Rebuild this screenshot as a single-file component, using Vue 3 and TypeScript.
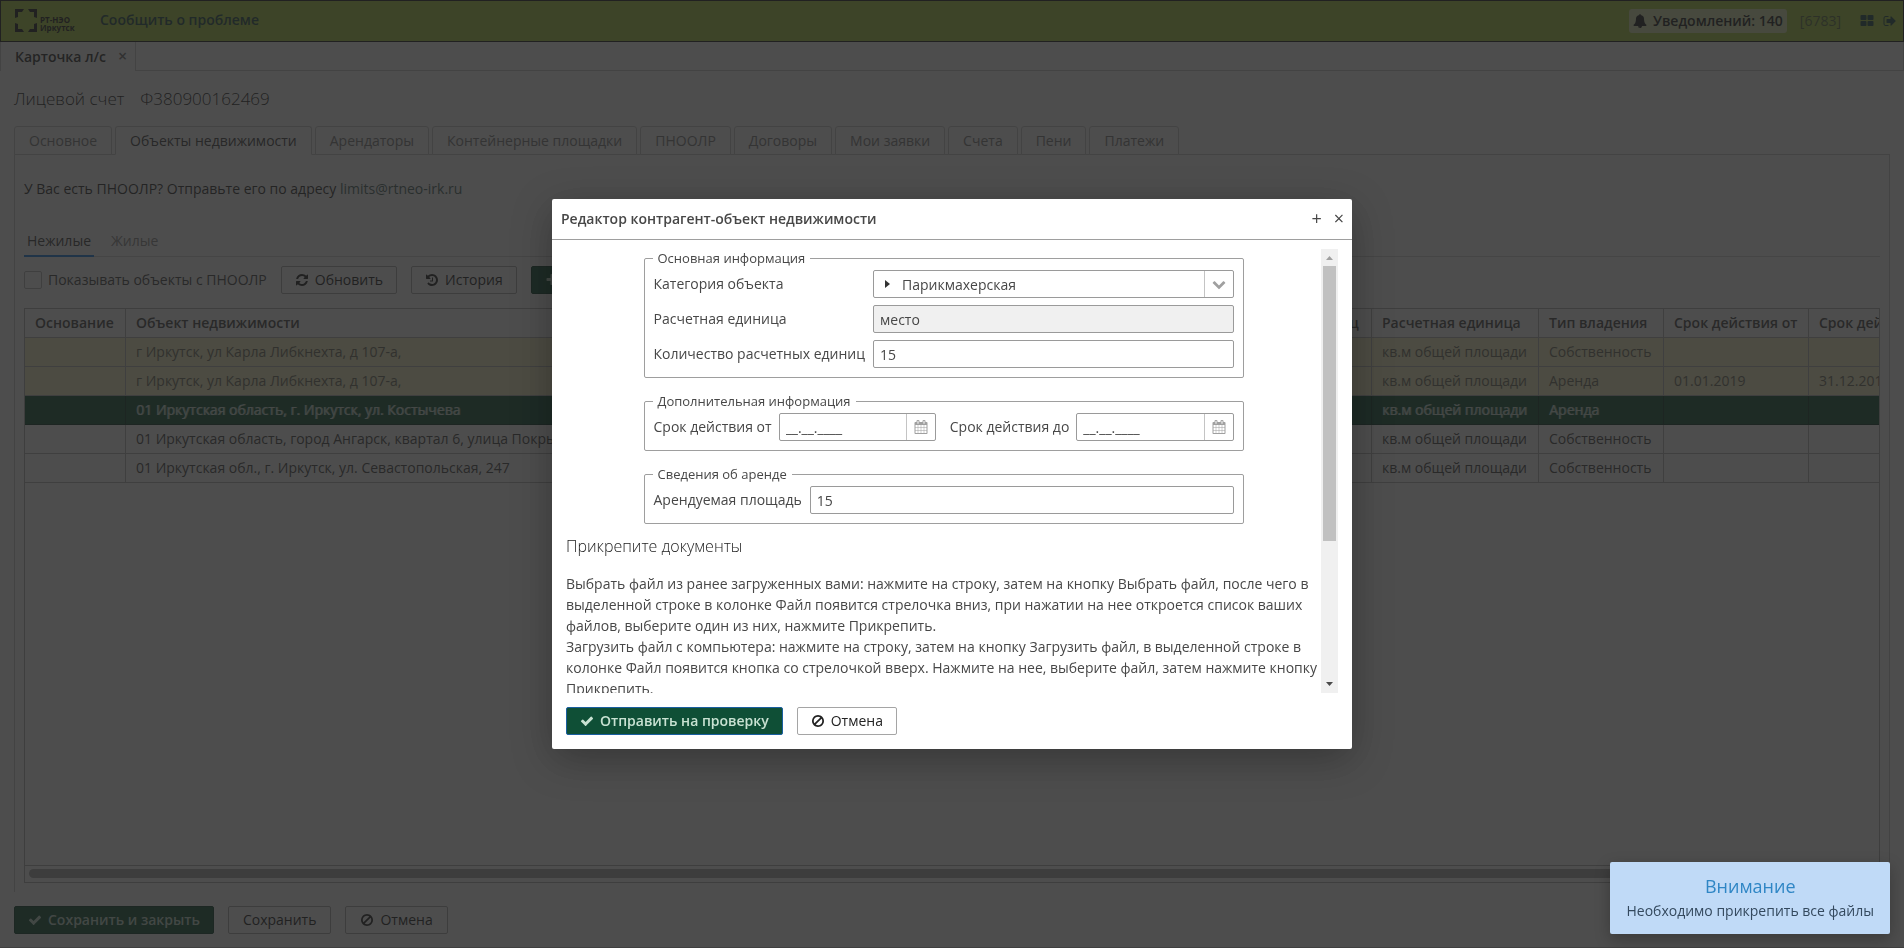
<script setup lang="ts">
import { ref } from 'vue'

const icons: Record<string, string> = {
  check: 'M1671 566q0 40-28 68l-724 724-136 136q-28 28-68 28t-68-28l-136-136-362-362q-28-28-28-68t28-68l136-136q28-28 68-28t68 28l294 295 656-657q28-28 68-28t68 28l136 136q28 28 28 68z',
  chevron: 'M1683 808l-742 741q-19 19-45 19t-45-19l-742-741q-19-19-19-45.500t19-45.500l166-165q19-19 45-19t45 19l531 531 531-531q19-19 45-19t45 19l166 165q19 19 19 45.500t-19 45.500z',
  refresh: 'M1639 1056q0 5-1 7-64 268-268 434.500t-478 166.500q-146 0-282.500-55t-243.500-157l-129 129q-19 19-45 19t-45-19-19-45v-448q0-26 19-45t45-19h448q26 0 45 19t19 45-19 45l-137 137q71 66 161 102t187 36q134 0 250-65t186-179q11-17 53-117 8-23 30-23h192q13 0 22.500 9.500t9.500 22.500zm25-800v448q0 26-19 45t-45 19h-448q-26 0-45-19t-19-45 19-45l138-138q-148-137-349-137-134 0-250 65t-186 179q-11 17-53 117-8 23-30 23h-199q-13 0-22.500-9.500t-9.500-22.500v-7q65-268 270-434.500t480-166.500q146 0 284 55.500t245 156.500l130-129q19-19 45-19t45 19 19 45z',
  history: 'M1664 896q0 156-61 298t-164 245-245 164-298 61q-172 0-327-72.500t-264-204.500q-7-10-6.500-22.500t8.500-20.500l137-138q10-9 25-9 16 2 23 12 73 95 179 147t225 52q104 0 198.500-40.500t163.500-109.500 109.500-163.500 40.500-198.500-40.500-198.500-109.500-163.500-163.500-109.500-198.500-40.500q-98 0-188 35.500t-160 101.500l137 138q31 30 14 69-17 40-59 40h-448q-26 0-45-19t-19-45v-448q0-42 40-59 39-17 69 14l130 129q107-101 244.500-156.500t284.500-55.500q156 0 298 61t245 164 164 245 61 298zm-640-288v448q0 14-9 23t-23 9h-320q-14 0-23-9t-9-23v-64q0-14 9-23t23-9h224v-352q0-14 9-23t23-9h64q14 0 23 9t9 23z',
  ban: 'M1440 893q0-161-87-295l-754 753q137 89 297 89 111 0 211.500-43.500t173.500-116.500 116-174.500 43-212.500zm-999 299l755-754q-135-91-300-91-148 0-273 73t-198 199-73 274q0 162 89 299zm1223-299q0 157-61 300t-163.500 246-245 164-298.500 61-298.500-61-245-164-163.500-246-61-300 61-299.500 163.500-245.500 245-164 298.500-61 298.500 61 245 164 163.500 245.500 61 299.500z',
  grid: 'M832 1024v384q0 52-38 90t-90 38h-512q-52 0-90-38t-38-90v-384q0-52 38-90t90-38h512q52 0 90 38t38 90zm0-768v384q0 52-38 90t-90 38h-512q-52 0-90-38t-38-90v-384q0-52 38-90t90-38h512q52 0 90 38t38 90zm896 768v384q0 52-38 90t-90 38h-512q-52 0-90-38t-38-90v-384q0-52 38-90t90-38h512q52 0 90 38t38 90zm0-768v384q0 52-38 90t-90 38h-512q-52 0-90-38t-38-90v-384q0-52 38-90t90-38h512q52 0 90 38t38 90z',
  signout: 'M704 1440q0 4 1 20t.5 26.500-3 23.500-10 19.500-20.500 6.500h-320q-119 0-203.500-84.500t-84.500-203.500v-704q0-119 84.500-203.500t203.500-84.500h320q13 0 22.500 9.500t9.500 22.500q0 4 1 20t.5 26.500-3 23.500-10 19.500-20.500 6.500h-320q-66 0-113 47t-47 113v704q0 66 47 113t113 47h312l11.500 1 11.500 3 8 5.500 7 9 2 13.500zm928-544q0 26-19 45l-544 544q-19 19-45 19t-45-19-19-45v-288h-448q-26 0-45-19t-19-45v-384q0-26 19-45t45-19h448v-288q0-26 19-45t45-19 45 19l544 544q19 19 19 45z',
  bell: 'M912 1696q0-16-16-16-59 0-101.500-42.500t-42.500-101.500q0-16-16-16t-16 16q0 73 51.500 124.500t124.500 51.500q16 0 16-16zm816-288q0 52-38 90t-90 38h-448q0 106-75 181t-181 75-181-75-75-181h-448q-52 0-90-38t-38-90q50-42 91-88t85-119.500 74.500-158.500 50-206 19.500-260q0-152 117-282.500t307-158.500q-8-19-8-39 0-40 28-68t68-28 68 28 28 68q0 20-8 39 190 28 307 158.500t117 282.500q0 139 19.500 260t50 206 74.500 158.500 85 119.500 91 88z',
  plus: 'M1600 736v192q0 40-28 68t-68 28h-416v416q0 40-28 68t-68 28h-192q-40 0-68-28t-28-68v-416h-416q-40 0-68-28t-28-68v-192q0-40 28-68t68-28h416v-416q0-40 28-68t68-28h192q40 0 68 28t28 68v416h416q40 0 68 28t28 68z',
  calendar: 'M192 1664h288v-288h-288v288zm352 0h320v-288h-320v288zm-352-352h288v-320h-288v320zm352 0h320v-320h-320v320zm-352-384h288v-288h-288v288zm736 736h320v-288h-320v288zm-384-736h320v-288h-320v288zm768 736h288v-288h-288v288zm-384-352h320v-320h-320v320zm-352-864v-288q0-13-9.500-22.500t-22.500-9.500h-64q-13 0-22.500 9.500t-9.500 22.500v288q0 13 9.500 22.500t22.500 9.500h64q13 0 22.500-9.500t9.500-22.500zm736 864h288v-320h-288v320zm-384-384h320v-288h-320v288zm384 0h288v-288h-288v288zm32-480v-288q0-13-9.500-22.500t-22.500-9.500h-64q-13 0-22.500 9.500t-9.500 22.500v288q0 13 9.500 22.500t22.500 9.500h64q13 0 22.500-9.500t9.500-22.500zm384-64v1280q0 52-38 90t-90 38h-1408q-52 0-90-38t-38-90v-1280q0-52 38-90t90-38h128v-96q0-66 47-113t113-47h64q66 0 113 47t47 113v96h384v-96q0-66 47-113t113-47h64q66 0 113 47t47 113v96h128q52 0 90 38t38 90z',
}

const tabs = ['Основное', 'Объекты недвижимости', 'Арендаторы', 'Контейнерные площадки', 'ПНООЛР', 'Договоры', 'Мои заявки', 'Счета', 'Пени', 'Платежи']
const activeTab = ref('Объекты недвижимости')

interface Row { object: string; unit: string; ownership: string; from: string; to: string; state: string }
const unit = 'кв.м общей площади'
const rows: Row[] = [
  { object: 'г Иркутск, ул Карла Либкнехта, д 107-а,', unit, ownership: 'Собственность', from: '', to: '', state: 'pending' },
  { object: 'г Иркутск, ул Карла Либкнехта, д 107-а,', unit, ownership: 'Аренда', from: '01.01.2019', to: '31.12.2019', state: 'pending' },
  { object: '01 Иркутская область, г. Иркутск, ул. Костычева', unit, ownership: 'Аренда', from: '', to: '', state: 'selected' },
  { object: '01 Иркутская область, город Ангарск, квартал 6, улица Покрышкина', unit, ownership: 'Собственность', from: '', to: '', state: '' },
  { object: '01 Иркутская обл., г. Иркутск, ул. Севастопольская, 247', unit, ownership: 'Собственность', from: '', to: '', state: '' },
]

const showPnoolr = ref(false)
const category = ref('Парикмахерская')
const unitName = ref('место')
const quantity = ref('15')
const dateFrom = ref('__.__.____')
const dateTo = ref('__.__.____')
const area = ref('15')
</script>

<template>
  <div class="page">
    <header class="topbar">
      <div class="logo">
        <svg class="logo-mark" viewBox="0 0 22 23" aria-hidden="true">
          <path d="M0 0h9l-2 3H3v5L0 9zM22 0h-9l2 3h4v5l3 1zM0 23h9l-2-3H3v-5l-3-1zM22 23h-9l2-3h4v-5l3-1z" />
        </svg>
        <span class="logo-text"><span>РТ-НЭО</span><span>Иркутск</span></span>
      </div>
      <a class="report" href="#">Сообщить о проблеме</a>
      <div class="topbar-right">
        <button class="notices" type="button">
          <svg class="icon" viewBox="0 0 1792 1792"><path :d="icons.bell" /></svg>Уведомлений: 140
        </button>
        <a class="account" href="#">[6783]</a>
        <button class="plain" type="button" aria-label="Меню"><svg class="icon" viewBox="0 0 1792 1792"><path :d="icons.grid" /></svg></button>
        <button class="plain" type="button" aria-label="Выход"><svg class="icon" viewBox="0 0 1792 1792"><path :d="icons.signout" /></svg></button>
      </div>
    </header>

    <nav class="doc-tabs">
      <div class="doc-tab">Карточка л/с <button type="button" class="plain close" aria-label="Закрыть вкладку">×</button></div>
      <div class="doc-rest"></div>
    </nav>

    <main class="main">
      <h1 class="title"><span>Лицевой счет</span><span>Ф380900162469</span></h1>

      <div class="tabs" role="tablist">
        <button v-for="t in tabs" :key="t" type="button" role="tab" class="tab" :class="{ active: t === activeTab }" @click="activeTab = t">{{ t }}</button>
        <div class="tabs-rest"></div>
      </div>

      <section class="panel">
        <p class="hint">У Вас есть ПНООЛР? Отправьте его по адресу <a href="#">limits@rtneo-irk.ru</a></p>
        <div class="subtabs" role="tablist">
          <button type="button" role="tab" class="subtab active">Нежилые</button>
          <button type="button" role="tab" class="subtab">Жилые</button>
        </div>
        <div class="toolbar">
          <label class="check"><input v-model="showPnoolr" type="checkbox">Показывать объекты с ПНООЛР</label>
          <button type="button" class="btn"><svg class="icon" viewBox="0 0 1792 1792"><path :d="icons.refresh" /></svg>Обновить</button>
          <button type="button" class="btn"><svg class="icon" viewBox="0 0 1792 1792"><path :d="icons.history" /></svg>История</button>
          <button type="button" class="btn primary"><svg class="icon" viewBox="0 0 1792 1792"><path :d="icons.plus" /></svg>Добавить</button>
        </div>

        <div class="grid-box">
          <div class="grid-view">
            <table class="grid">
              <colgroup>
                <col class="c-base"><col class="c-object"><col class="c-qty"><col class="c-unit"><col class="c-own"><col class="c-date"><col class="c-date">
              </colgroup>
              <thead>
                <tr>
                  <th>Основание</th><th>Объект недвижимости</th><th>Количество расчетных единиц</th><th>Расчетная единица</th><th>Тип владения</th><th>Срок действия от</th><th>Срок действия до</th>
                </tr>
              </thead>
              <tbody>
                <tr v-for="(r, i) in rows" :key="i" :class="r.state">
                  <td></td><td>{{ r.object }}</td><td></td><td>{{ r.unit }}</td><td>{{ r.ownership }}</td><td>{{ r.from }}</td><td>{{ r.to }}</td>
                </tr>
              </tbody>
            </table>
          </div>
          <div class="grid-scroll"><div class="grid-thumb"></div></div>
        </div>
      </section>

      <footer class="actions">
        <button type="button" class="btn primary"><svg class="icon" viewBox="0 0 1792 1792"><path :d="icons.check" /></svg>Сохранить и закрыть</button>
        <button type="button" class="btn">Сохранить</button>
        <button type="button" class="btn"><svg class="icon" viewBox="0 0 1792 1792"><path :d="icons.ban" /></svg>Отмена</button>
      </footer>
    </main>
  </div>

  <div class="curtain">
    <div class="modal" role="dialog" aria-labelledby="dlg-title">
      <div class="modal-head">
        <h2 id="dlg-title">Редактор контрагент-объект недвижимости</h2>
        <button type="button" class="plain" aria-label="Развернуть">+</button>
        <button type="button" class="plain" aria-label="Закрыть">×</button>
      </div>

      <div class="modal-body">
        <div class="content">
          <fieldset>
            <legend>Основная информация</legend>
            <div class="form">
              <label for="category">Категория объекта</label>
              <div class="field">
                <svg class="caret" viewBox="0 0 5 8" aria-hidden="true"><path d="M0 0l5 4-5 4z" /></svg>
                <select id="category" v-model="category"><option>Парикмахерская</option></select>
                <span class="addon"><svg class="icon" viewBox="0 0 1792 1792"><path :d="icons.chevron" /></svg></span>
              </div>
              <label for="unit">Расчетная единица</label>
              <div class="field readonly"><input id="unit" v-model="unitName" type="text" readonly></div>
              <label for="qty">Количество расчетных единиц</label>
              <div class="field"><input id="qty" v-model="quantity" type="text"></div>
            </div>
          </fieldset>

          <fieldset>
            <legend>Дополнительная информация</legend>
            <div class="dates">
              <label for="from">Срок действия от</label>
              <div class="field">
                <input id="from" v-model="dateFrom" type="text">
                <button type="button" class="addon" aria-label="Выбрать дату начала"><svg class="icon" viewBox="0 0 1792 1792"><path :d="icons.calendar" /></svg></button>
              </div>
              <label class="second" for="to">Срок действия до</label>
              <div class="field">
                <input id="to" v-model="dateTo" type="text">
                <button type="button" class="addon" aria-label="Выбрать дату окончания"><svg class="icon" viewBox="0 0 1792 1792"><path :d="icons.calendar" /></svg></button>
              </div>
            </div>
          </fieldset>

          <fieldset>
            <legend>Сведения об аренде</legend>
            <div class="form">
              <label for="area">Арендуемая площадь</label>
              <div class="field"><input id="area" v-model="area" type="text"></div>
            </div>
          </fieldset>

          <h3>Прикрепите документы</h3>
          <p>Выбрать файл из ранее загруженных вами: нажмите на строку, затем на кнопку Выбрать файл, после чего в выделенной строке в колонке Файл появится стрелочка вниз, при нажатии на нее откроется список ваших файлов, выберите один из них, нажмите Прикрепить.<br>Загрузить файл с компьютера: нажмите на строку, затем на кнопку Загрузить файл, в выделенной строке в колонке Файл появится кнопка со стрелочкой вверх. Нажмите на нее, выберите файл, затем нажмите кнопку Прикрепить.</p>
        </div>
        <div class="scrollbar">
          <svg viewBox="0 0 17 17" class="up"><path d="M5 11h7L8.500 7z" /></svg>
          <div class="track"><div class="thumb"></div></div>
          <svg viewBox="0 0 17 17" class="down"><path d="M5 6h7l-3.500 4z" /></svg>
        </div>
      </div>

      <div class="modal-foot">
        <button type="button" class="btn submit"><svg class="icon" viewBox="0 0 1792 1792"><path :d="icons.check" /></svg>Отправить на проверку</button>
        <button type="button" class="btn"><svg class="icon" viewBox="0 0 1792 1792"><path :d="icons.ban" /></svg>Отмена</button>
      </div>
    </div>
  </div>

  <div class="toast" role="alert">
    <h2>Внимание</h2>
    <p>Необходимо прикрепить все файлы</p>
  </div>
</template>

<style>
body {
  margin: 0;
  background: #fafafa;
  overflow: hidden;
}
#app {
  font: 400 14px/21px "Open Sans", "Noto Sans", sans-serif;
  color: #474747;
}
</style>

<style scoped>
* {
  box-sizing: border-box;
}
button,
input,
select {
  font: inherit;
  color: inherit;
  margin: 0;
}
h1, h2, h3, p {
  margin: 0;
}
.icon {
  width: 14px;
  height: 14px;
  flex: none;
  fill: currentColor;
}
.plain {
  border: 0;
  padding: 0;
  background: none;
  display: flex;
  align-items: center;
}
.page {
  min-height: 100vh;
  display: flex;
  flex-direction: column;
  border-bottom: 1px solid #b5b5b5;
}
.topbar {
  height: 42px;
  display: flex;
  align-items: center;
  border: 1px solid #222;
  background: #a9cc40;
  padding: 0 6px 1px 14px;
}
.logo {
  display: flex;
  gap: 3px;
  color: #222;
  width: 85px;
}
.logo-mark {
  width: 22px;
  height: 23px;
  fill: currentColor;
}
.logo-text {
  display: flex;
  flex-direction: column;
  font-size: 8px;
  line-height: 8px;
  font-weight: 700;
  padding-top: 7px;
}
.report {
  padding-bottom: 2px;
  color: #1f4a48;
  font-weight: 600;
  text-decoration: none;
}
.topbar-right {
  margin-left: auto;
  display: flex;
  align-items: center;
  color: #1f4a48;
}
.notices {
  display: flex;
  align-items: center;
  gap: 6px;
  height: 24px;
  padding: 0 4px;
  border: 0;
  border-radius: 3px;
  background: #d9e6ae;
  color: #222;
  font-weight: 600;
  margin-right: 13px;
}
.account {
  color: #5a7040;
  text-decoration: none;
  margin-right: 19px;
}
.topbar-right .plain + .plain {
  margin-left: 9px;
}
.doc-tabs {
  display: flex;
  height: 29px;
}
.doc-tab {
  display: flex;
  align-items: center;
  gap: 12px;
  border: solid #c8c8c8;
  border-width: 0 1px;
  padding: 0 8px 0 14px;
  font-weight: 600;
  color: #303030;
}
.close {
  font-size: 16px;
  color: #707070;
}
.doc-rest {
  flex: 1;
  border: solid #c8c8c8;
  border-width: 0 1px 1px 0;
}
.main {
  flex: 1;
  display: flex;
  flex-direction: column;
  padding: 14px 14px 13px;
}
.title {
  display: flex;
  gap: 16px;
  font-size: 17px;
  line-height: 28px;
  font-weight: 300;
  color: #222;
}
.tabs {
  display: flex;
  gap: 3px;
  margin-top: 13px;
  background: linear-gradient(#c8c8c8, #c8c8c8) bottom / 100% 1px no-repeat;
}
.tab {
  height: 29px;
  padding: 0 14px;
  border: 1px solid #c8c8c8;
  border-radius: 3px 3px 0 0;
  background: #f7f7f7;
  color: #7d7d7d;
}
.tab.active {
  background: #fafafa;
  border-bottom-color: #fafafa;
  color: #404040;
}
.tabs-rest {
  flex: 1;
}
.panel {
  flex: 1;
  display: flex;
  flex-direction: column;
  border: solid #c8c8c8;
  border-width: 0 1px;
  padding: 23px 9px 9px;
}
.hint {
  color: #303030;
}
.hint a {
  color: #4a6562;
  text-decoration: none;
}
.subtabs {
  display: flex;
  gap: 14px;
  margin-top: 27px;
  border-bottom: 1px solid #d0d0d0;
}
.subtab {
  height: 31px;
  padding: 0 3px;
  border: 0;
  border-bottom: 2px solid transparent;
  margin-bottom: -1px;
  background: none;
  color: #8a8a8a;
}
.subtab.active {
  border-bottom-color: #197de1;
  color: #404040;
}
.toolbar {
  display: flex;
  align-items: center;
  gap: 14px;
  margin-top: 9px;
}
.check {
  display: flex;
  align-items: center;
  gap: 6px;
  padding-bottom: 1px;
}
.check input {
  appearance: none;
  width: 18px;
  height: 18px;
  border: 1px solid #b5b5b5;
  border-radius: 2px;
}
.btn {
  display: inline-flex;
  align-items: center;
  gap: 6px;
  height: 28px;
  padding: 0 13px 1px;
  border: 1px solid #a5a5a5;
  border-radius: 2px;
  background: transparent;
  color: #222;
  font-weight: 500;
}
.page .btn {
  border-color: #a8a8a8;
}
.page .btn.primary {
  background: #0f4f36;
  border-color: #0a3d28;
  color: #c2dccd;
  font-weight: 600;
}
.actions .btn:not(.primary) {
  padding: 0 14px 1px;
}
.grid-box {
  flex: 1;
  display: flex;
  flex-direction: column;
  margin-top: 14px;
  border: 1px solid #b0b0b0;
}
.grid-view {
  flex: 1 0 0;
  overflow: hidden;
}
.grid {
  table-layout: fixed;
  width: 1929px;
  border-collapse: separate;
  border-spacing: 0;
}
.c-base { width: 101px; }
.c-object { width: 1002px; }
.c-qty { width: 244px; }
.c-unit { width: 167px; }
.c-own { width: 125px; }
.c-date { width: 145px; }
.grid th,
.grid td {
  height: 29px;
  padding: 0 9px 1px 10px;
  border: solid #b5b5b5;
  border-width: 0 1px 1px 0;
  text-align: left;
  white-space: nowrap;
  overflow: hidden;
}
.grid th {
  font-weight: 600;
  color: #484848;
}
.pending td {
  background: #f2eec2;
  color: #707060;
}
.selected td {
  background: #0f4f36;
  border-color: #0a3527;
  color: #cfe0d8;
  text-shadow: 1px 0 0 rgba(207, 224, 216, 0.7);
}
.grid-scroll {
  height: 17px;
  border-top: 1px solid #b0b0b0;
  padding: 3px 4px;
}
.grid-thumb {
  width: 90%;
  height: 9px;
  border-radius: 5px;
  background: #a8a8a8;
}
.actions {
  display: flex;
  gap: 14px;
  padding-top: 14px;
}

.curtain {
  position: fixed;
  inset: 0;
  display: flex;
  align-items: center;
  justify-content: center;
  background: rgba(34, 34, 34, 0.8);
}
.modal {
  width: 800px;
  height: 550px;
  max-width: 100%;
  max-height: 100%;
  display: flex;
  flex-direction: column;
  background: #fff;
  border-radius: 2px;
  box-shadow: 0 10px 40px rgba(0, 0, 0, 0.3);
}
.modal-head {
  display: flex;
  align-items: center;
  gap: 12px;
  height: 41px;
  padding: 0 8px 1px 9px;
  border-bottom: 1px solid #9e9e9e;
}
.modal-head h2 {
  flex: 1;
  font-size: 14px;
  font-weight: 600;
}
.modal-head .plain {
  font-size: 18px;
}
.modal-body {
  flex: 1;
  min-height: 0;
  display: flex;
  padding: 9px 14px 0;
}
.content {
  flex: 1;
  overflow: hidden;
}
fieldset {
  width: 600px;
  max-width: 100%;
  margin: 0 auto 14px;
  padding: 2px 9px 9px;
  border: 1px solid #9e9e9e;
  border-radius: 2px;
}
legend {
  margin-left: -1px;
  padding: 0 5px;
  font-size: 13px;
  line-height: 19px;
}
fieldset label {
  padding-bottom: 1px;
}
.form {
  display: grid;
  grid-template-columns: auto 1fr;
  gap: 7px 8px;
  align-items: center;
}
.dates {
  display: grid;
  grid-template-columns: auto 1fr auto 1fr;
  gap: 7px;
  align-items: center;
}
.dates .second {
  margin-left: 7px;
}
.field {
  display: flex;
  align-items: center;
  height: 28px;
  min-width: 0;
  border: 1px solid #9a9a9a;
  border-radius: 2px;
}
.field input,
.field select {
  flex: 1;
  min-width: 0;
  width: 100%;
  height: 26px;
  padding: 1px 6px 0;
  border: 0;
  outline: 0;
  background: none;
  appearance: none;
}
.field.readonly {
  background: #f0f0f0;
}
.caret {
  width: 5px;
  height: 8px;
  margin: 0 6px 0 11px;
  fill: #333;
}
.addon {
  display: flex;
  align-items: center;
  justify-content: center;
  width: 29px;
  height: 26px;
  padding: 0;
  border: 0;
  border-left: 1px solid #c4c4c4;
  background: none;
  color: #a0a0a0;
}
h3 {
  font-size: 16px;
  line-height: 24px;
  font-weight: 300;
  color: #222;
  margin: -4px 0 15px;
}
.scrollbar {
  width: 17px;
  display: flex;
  flex-direction: column;
  background: #f0f0f0;
}
.scrollbar svg {
  height: 17px;
  fill: #4a4a4a;
}
.scrollbar .up {
  fill: #a0a0a0;
}
.track {
  flex: 1;
  padding: 0 2px;
}
.thumb {
  height: 67%;
  background: #c1c1c1;
}
.modal-foot {
  display: flex;
  gap: 14px;
  padding: 14px;
}
.submit {
  border-color: #1a5fa0;
  background: #0f4f36;
  color: #c8e2d2;
  font-weight: 600;
}
.toast {
  position: fixed;
  right: 14px;
  bottom: 14px;
  padding: 11px 16px 13px;
  border-radius: 2px;
  background: #c0daf7;
  box-shadow: 0 5px 15px rgba(0, 0, 0, 0.25);
  text-align: center;
  color: #34495e;
}
.toast h2 {
  font-size: 18px;
  line-height: 26px;
  margin-bottom: 1px;
  font-weight: 400;
  color: #2f86c5;
}
</style>
